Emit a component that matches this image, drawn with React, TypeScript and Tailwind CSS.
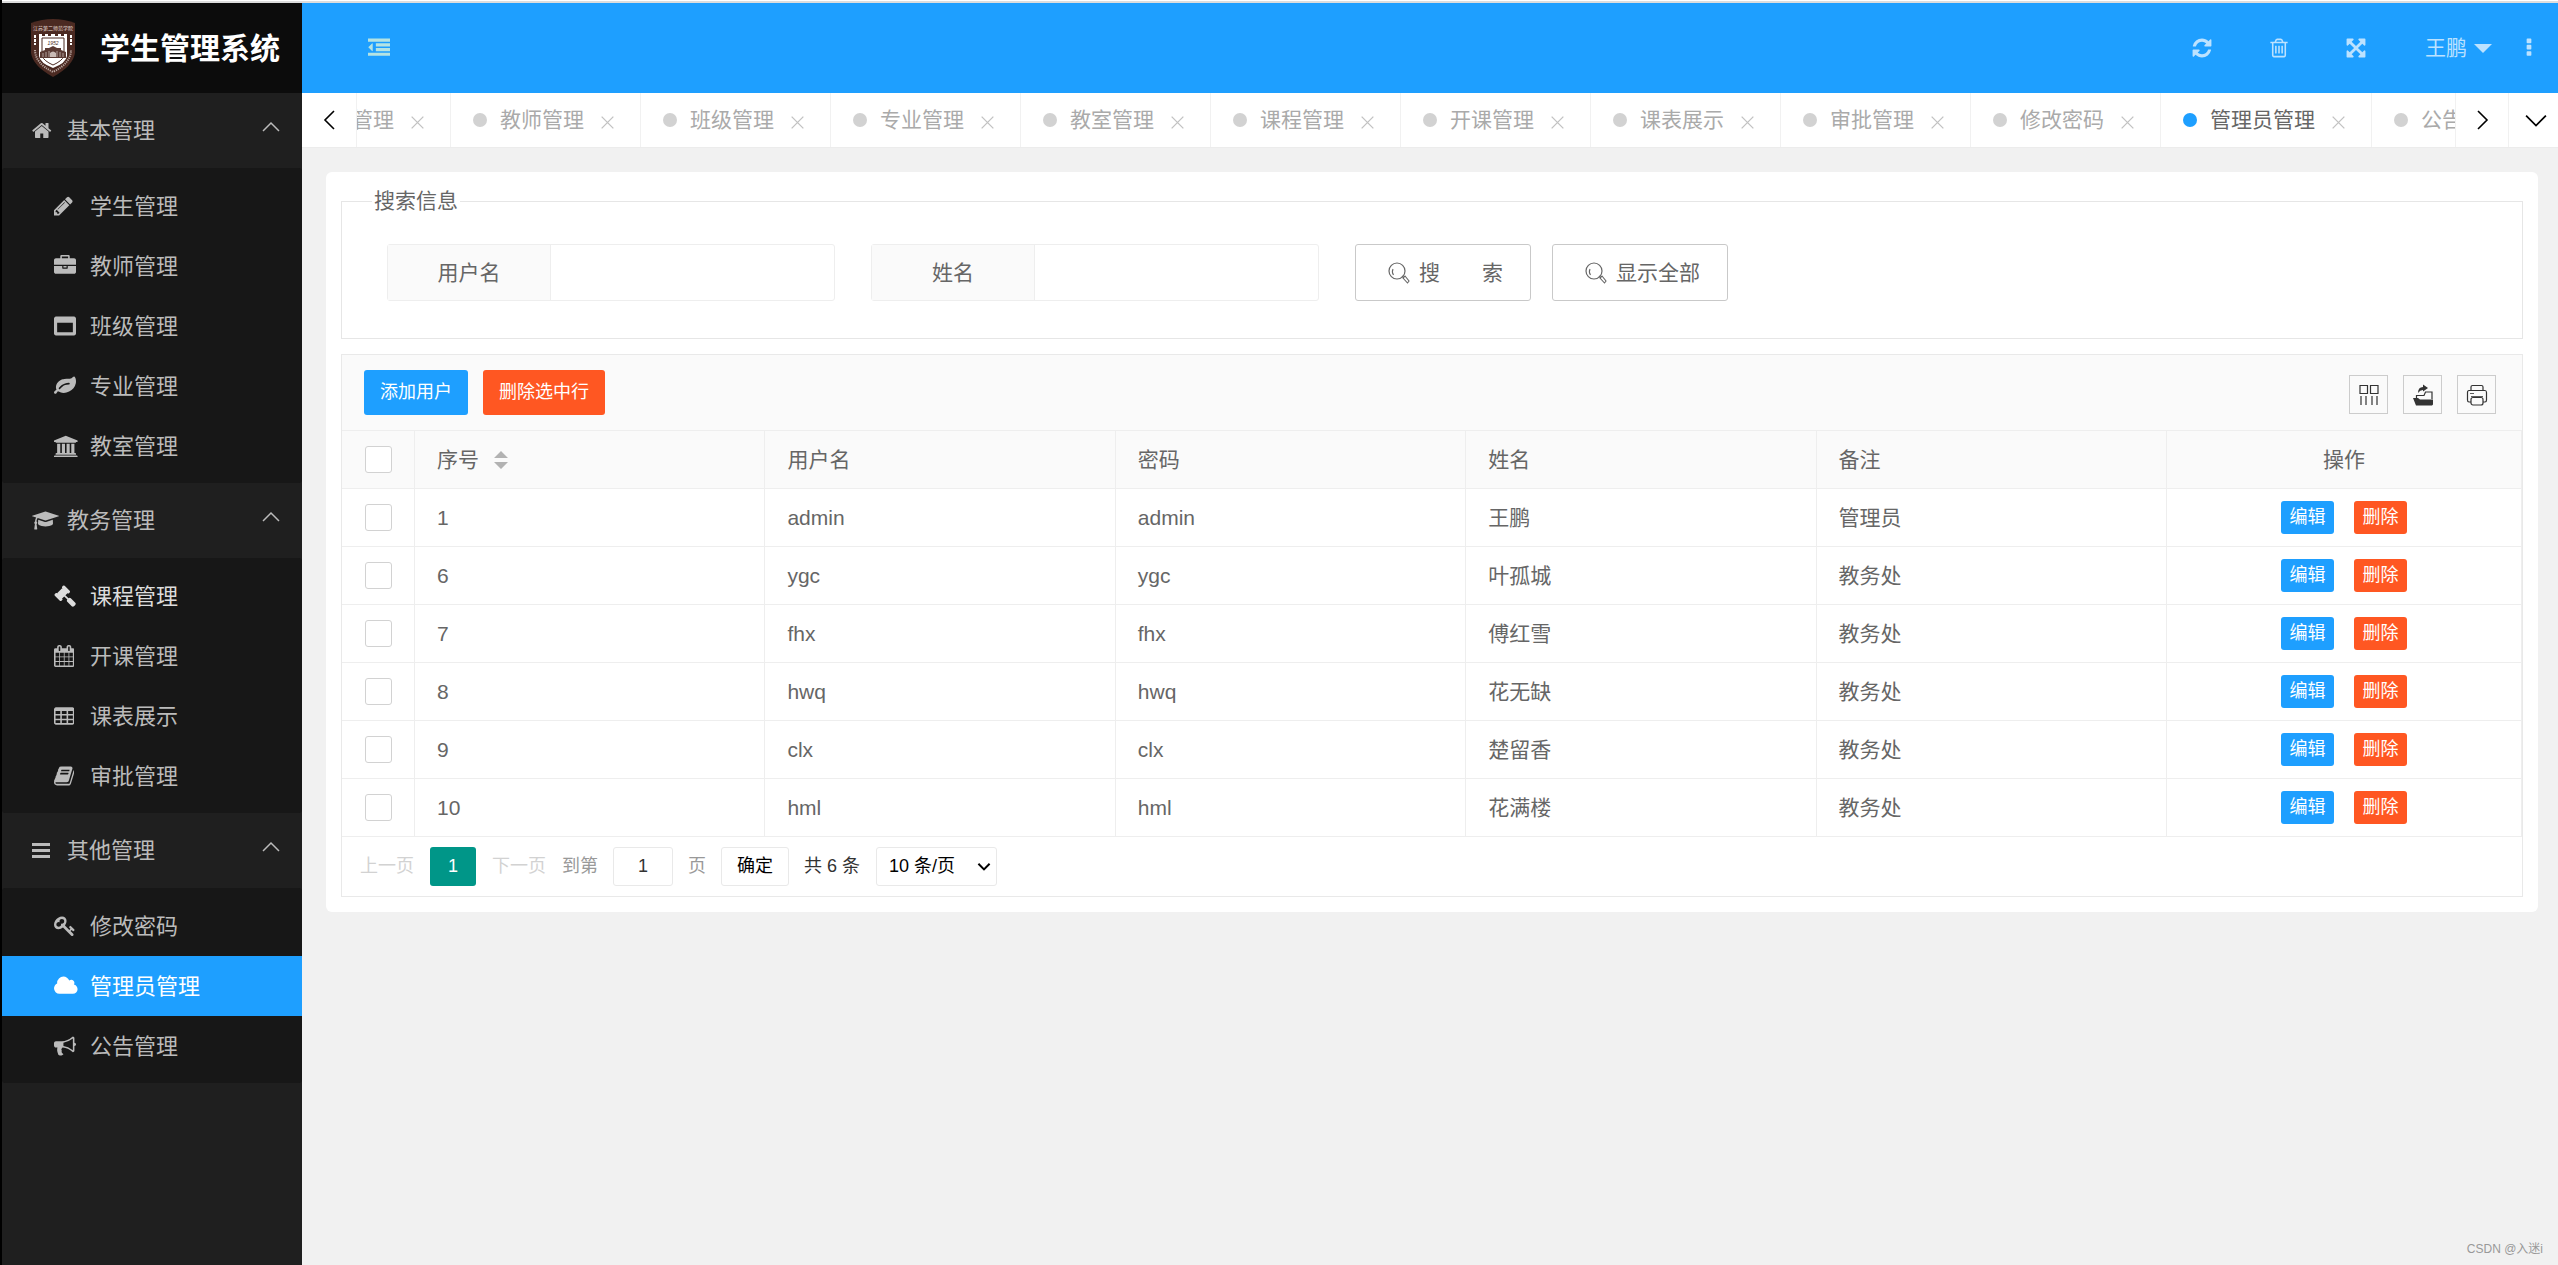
import React from 'react';
import clsx from 'clsx';

interface Glyph {
    box: string;
    d: string;
}

const glyphs: Record<string, Glyph> = {
    home: {
        box: '64 0 1664 1792',
        d: 'M1472 992v480q0 26-19 45t-45 19h-384v-384h-256v384h-384q-26 0-45-19t-19-45v-480q0-1 .5-3t.5-3l575-474 575 474q1 2 1 6zm223-69l-62 74q-8 9-21 11h-3q-13 0-21-7l-692-577-692 577q-12 8-24 7-13-2-21-11l-62-74q-8-10-7-23.5t11-21.5l719-599q32-26 76-26t76 26l244 204v-195q0-14 9-23t23-9h192q14 0 23 9t9 23v408l219 182q10 8 11 21.5t-7 23.5z',
    },
    pencil: {
        box: '128 0 1536 1792',
        d: 'M491 1536l91-91-235-235-91 91v107h128v128h107zm523-928q0-22-22-22-10 0-17 7l-542 542q-7 7-7 17 0 22 22 22 10 0 17-7l542-542q7-7 7-17zm-54-192l416 416-832 832h-416v-416zm683 96q0 53-37 90l-166 166-416-416 166-165q36-38 90-38 53 0 91 38l235 234q37 39 37 91z',
    },
    briefcase: {
        box: '0 0 1792 1792',
        d: 'M640 256h512v-128h-512v128zm1152 640v480q0 66-47 113t-113 47h-1472q-66 0-113-47t-47-113v-480h672v160q0 26 19 45t45 19h320q26 0 45-19t19-45v-160h672zm-768 0v128h-256v-128h256zm768-480v384h-1792v-384q0-66 47-113t113-47h352v-160q0-40 28-68t68-28h576q40 0 68 28t28 68v160h352q66 0 113 47t47 113z',
    },
    window: {
        box: '0 0 1792 1792',
        d: 'M256 1408h1280v-768h-1280v768zM1792 288v1216q0 66-47 113t-113 47h-1472q-66 0-113-47t-47-113v-1216q0-66 47-113t113-47h1472q66 0 113 47t47 113z',
    },
    leaf: {
        box: '0 0 1792 1792',
        d: 'M1280 704q0-26-19-45t-45-19q-172 0-318 49.5t-259.5 134-235.5 219.5q-19 21-19 45 0 26 19 45t45 19q24 0 45-19 27-24 74-71t67-66q137-124 268.5-176t313.5-52q26 0 45-19t19-45zm512-198q0 95-20 193-46 224-184.5 383t-357.5 268q-214 108-438 108-148 0-286-47-15-5-88-42t-96-37q-16 0-39.5 32t-45 70-52.5 70-60 32q-43 0-63.5-17.5t-45.5-59.5q-2-4-6-11t-5.5-10-3-9.5-1.5-13.5q0-35 31-73.5t68-65.5 68-56 31-48q0-4-14-38t-16-44q-9-51-9-104 0-115 43.5-220t119-184.5 170.5-139 204-95.5q55-18 145-25.5t179.5-9 178.5-6 163.5-24 113.5-56.5l29.5-29.5 29.5-28 27-20 36.5-16 43.5-4.5q39 0 70.5 46t47.5 112 24 124 8 96z',
    },
    university: {
        box: '-128 -64 1920 1792',
        d: 'M832 0l960 384v128h-128q0 26-20.5 45t-48.5 19h-1526q-28 0-48.5-19t-20.5-45h-128v-128zm-704 640h256v768h128v-768h256v768h128v-768h256v768h128v-768h256v768h59q28 0 48.5 19t20.5 45v64h-1664v-64q0-26 20.5-45t48.5-19h59v-768zm1595 960q28 0 48.5 19t20.5 45v128h-1920v-128q0-26 20.5-45t48.5-19h1782z',
    },
    graduation: {
        box: '0 0 2304 1792',
        d: 'M1774 836l18 316q4 69-82 128t-235 93.5-323 34.5-323-34.5-235-93.5-82-128l18-316 574 181q22 7 48 7t48-7zm530-324q0 23-22 31l-1120 352q-4 1-10 1t-10-1l-652-206q-43 34-71 111.5t-34 178.5q63 36 63 109 0 69-58 107l58 433q2 14-8 25-9 11-24 11h-192q-15 0-24-11-10-11-8-25l58-433q-58-38-58-107 0-73 65-111 11-207 98-330l-333-104q-22-8-22-31t22-31l1120-352q4-1 10-1t10 1l1120 352q22 8 22 31z',
    },
    gavel: {
        box: '0 0 1792 1792',
        d: 'M1771 1536q0 53-37 90l-107 108q-39 37-91 37-53 0-90-37l-363-364q-38-36-38-90 0-53 43-96l-256-256-126 126q-14 14-34 14t-34-14q2 2 12.5 12t12.5 13 10 11.5 10 13.5 6 13.5 5.5 16.5 1.5 18q0 38-28 68-3 3-16.5 18t-19 20.5-18.5 16.5-22 15.5-22 9-26 4.5q-40 0-68-28l-408-408q-28-28-28-68 0-13 4.5-26t9-22 15.5-22 16.5-18.5 20.5-19 18-16.5q30-28 68-28 10 0 18 1.5t16.5 5.5 13.5 6 13.5 10 11.5 10 13 12.5 12 12.5q-14-14-14-34t14-34l348-348q14-14 34-14t34 14q-2-2-12.5-12t-12.5-13-10-11.5-10-13.5-6-13.5-5.5-16.5-1.5-18q0-38 28-68 3-3 16.5-18t19-20.5 18.5-16.5 22-15.5 22-9 26-4.5q40 0 68 28l408 408q28 28 28 68 0 13-4.5 26t-9 22-15.5 22-16.5 18.5-20.5 19-18 16.5q-30 28-68 28-10 0-18-1.5t-16.5-5.5-13.5-6-13.5-10-11.5-10-13-12.5-12-12.5q14 14 14 34t-14 34l-126 126 256 256q43-43 96-43 52 0 91 37l363 363q37 39 37 91z',
    },
    calendar: {
        box: '64 0 1664 1792',
        d: 'M192 1664h288v-288h-288v288zm352 0h320v-288h-320v288zm-352-352h288v-320h-288v320zm352 0h320v-320h-320v320zm-352-384h288v-288h-288v288zm736 736h320v-288h-320v288zm-384-736h320v-288h-320v288zm768 736h288v-288h-288v288zm-384-352h320v-320h-320v320zm-352-864v-288q0-13-9.5-22.5t-22.5-9.5h-64q-13 0-22.5 9.5t-9.5 22.5v288q0 13 9.5 22.5t22.5 9.5h64q13 0 22.5-9.5t9.5-22.5zm736 864h288v-320h-288v320zm-384-384h320v-288h-320v288zm384 0h288v-288h-288v288zm32-480v-288q0-13-9.5-22.5t-22.5-9.5h-64q-13 0-22.5 9.5t-9.5 22.5v288q0 13 9.5 22.5t22.5 9.5h64q13 0 22.5-9.5t9.5-22.5zm384-64v1280q0 52-38 90t-90 38h-1408q-52 0-90-38t-38-90v-1280q0-52 38-90t90-38h128v-96q0-66 47-113t113-47h64q66 0 113 47t47 113v96h384v-96q0-66 47-113t113-47h64q66 0 113 47t47 113v96h128q52 0 90 38t38 90z',
    },
    table: {
        box: '64 64 1664 1792',
        d: 'M192 544h384v256h-384zM704 544h384v256h-384zM1216 544h384v256h-384zM192 928h384v256h-384zM704 928h384v256h-384zM1216 928h384v256h-384zM192 1312h384v224h-384zM704 1312h384v224h-384zM1216 1312h384v224h-384zM1728 416v1088q0 66-47 113t-113 47h-1344q-66 0-113-47t-47-113v-1088q0-66 47-113t113-47h1344q66 0 113 47t47 113z',
    },
    book: {
        box: '64 0 1664 1792',
        d: 'M1703 478q40 57 18 129l-275 906q-19 64-76.5 107.5t-122.5 43.5h-923q-77 0-148.5-53.5t-99.5-131.5q-24-67-2-127 0-4 3-27t4-37q1-8-3-21.5t-3-19.5q2-11 8-21t16.5-23.5 16.5-23.5q23-38 45-91.5t30-91.5q3-10 .5-30t-.5-28q3-11 17-28t17-23q21-36 42-92t25-90q1-9-2.5-32t.5-28q4-13 22-30.5t22-22.5q19-26 42.5-84.5t27.5-96.5q1-8-3-25.5t-2-26.5q2-8 9-18t18-23 17-21q8-12 16.5-30.5t15-35 16-36 19.5-32 26.5-23.5 36-11.5 47.5 5.5l-1 3q38-9 51-9h761q74 0 114 56t18 130l-274 906q-36 119-71.5 153.5t-128.5 34.5h-869q-27 0-38 15-11 16-1 43 24 70 144 70h923q29 0 56-15.5t35-41.5l300-987q7-22 5-57 38 15 59 43zm-1064 2q-4 13 2 22.5t20 9.5h608q13 0 25.5-9.5t16.5-22.5l21-64q4-13-2-22.5t-20-9.5h-608q-13 0-25.5 9.5t-16.5 22.5zm-83 256q-4 13 2 22.5t20 9.5h608q13 0 25.5-9.5t16.5-22.5l21-64q4-13-2-22.5t-20-9.5h-608q-13 0-25.5 9.5t-16.5 22.5z',
    },
    bars: {
        box: '128 0 1536 1792',
        d: 'M128 256h1536v256h-1536zM128 768h1536v256h-1536zM128 1280h1536v256h-1536z',
    },
    key: {
        box: '0 0 1792 1792',
        d: 'M832 512q0-80-56-136t-136-56-136 56-56 136q0 42 19 83-41-19-83-19-80 0-136 56t-56 136 56 136 136 56 136-56 56-136q0-42-19-83 41 19 83 19 80 0 136-56t56-136zm851 704q0 17-49 66t-66 49q-9 0-28.5-16t-36.5-33-38.5-40-24.5-26l-96 96 220 220q28 28 28 68 0 42-39 81t-81 39q-40 0-68-28l-671-671q-176 131-365 131-163 0-265.5-102.5t-102.5-265.5q0-160 95-313t248-248 313-95q163 0 265.5 102.5t102.5 265.5q0 189-131 365l355 355 96-96q-3-3-26-24.5t-40-38.5-33-36.5-16-28.5q0-17 49-66t66-49q13 0 23 10 6 6 46 44.5t82 79.5 86.5 86 73 78 28.5 41z',
    },
    cloud: {
        box: '-64 0 1920 1792',
        d: 'M1856 1152q0 159-112.5 271.5t-271.5 112.5h-1088q-185 0-316.5-131.5t-131.5-316.5q0-132 71-241.5t187-163.5q-2-28-2-43 0-212 150-362t362-150q158 0 286.5 88t187.5 230q70-62 166-62 106 0 181 75t75 181q0 75-41 138 129 30 213 134.5t84 239.5z',
    },
    bullhorn: {
        box: '0 0 1792 1792',
        d: 'M1664 640q53 0 90.5 37.5t37.5 90.5-37.5 90.5-90.5 37.5v384q0 52-38 90t-90 38q-417-347-812-380-58 19-91 66t-31 100.5 40 92.5q-20 33-23 65.5t6 58 33.5 55 48 50 61.5 50.5q-29 58-111.5 83t-168.5 11.5-132-55.5q-7-23-29.5-87.5t-32-94.5-23-89-15-101 3.5-98.5 22-110.5h-122q-66 0-113-47t-47-113v-192q0-66 47-113t113-47h480q435 0 896-384 52 0 90 38t38 90v384zm-128 604v-954q-394 302-768 343v270q377 42 768 341z',
    },
    dedent: {
        box: '0 0 1792 1792',
        d: 'M384 544v576q0 13-9.5 22.5t-22.5 9.5q-14 0-23-9l-288-288q-9-9-9-23t9-23l288-288q9-9 23-9 13 0 22.5 9.5t9.5 22.5zM0 128h1792v256h-1792zM640 512h1152v256h-1152zM640 896h1152v256h-1152zM0 1280h1792v256h-1792z',
    },
    refresh: {
        box: '0 0 1792 1792',
        d: 'M1639 1056q0 5-1 7-64 268-268 434.5t-478 166.5q-146 0-282.5-55t-243.5-157l-129 129q-19 19-45 19t-45-19-19-45v-448q0-26 19-45t45-19h448q26 0 45 19t19 45-19 45l-137 137q71 66 161 102t187 36q134 0 250-65t186-179q11-17 53-117 8-23 30-23h192q13 0 22.5 9.5t9.5 22.5zm25-800v448q0 26-19 45t-45 19h-448q-26 0-45-19t-19-45 19-45l138-138q-148-137-349-137-134 0-250 65t-186 179q-11 17-53 117-8 23-30 23h-199q-13 0-22.5-9.5t-9.5-22.5v-7q65-268 270-434.5t480-166.5q146 0 284 55.5t245 156.5l130-129q19-19 45-19t45 19 19 45z',
    },
    trash: {
        box: '0 0 1792 1792',
        d: 'M704 736v576q0 14-9 23t-23 9h-64q-14 0-23-9t-9-23v-576q0-14 9-23t23-9h64q14 0 23 9t9 23zm256 0v576q0 14-9 23t-23 9h-64q-14 0-23-9t-9-23v-576q0-14 9-23t23-9h64q14 0 23 9t9 23zm256 0v576q0 14-9 23t-23 9h-64q-14 0-23-9t-9-23v-576q0-14 9-23t23-9h64q14 0 23 9t9 23zm128 724v-948h-896v948q0 22 7 40.5t14.5 27 10.5 8.5h832q3 0 10.5-8.5t14.5-27 7-40.5zm-672-1076h448l-48-117q-7-9-17-11h-317q-10 2-17 11zm928 32v64q0 14-9 23t-23 9h-96v948q0 83-47 143.5t-113 60.5h-832q-66 0-113-58.5t-47-141.5v-952h-96q-14 0-23-9t-9-23v-64q0-14 9-23t23-9h309l70-167q15-37 54-63t79-26h320q40 0 79 26t54 63l70 167h309q14 0 23 9t9 23z',
    },
    expand: {
        box: '0 0 1792 1792',
        d: 'M1411 541l-355 355 355 355 144-144q29-31 70-14 39 17 39 59v448q0 26-19 45t-45 19h-448q-42 0-59-40-17-39 14-69l144-144-355-355-355 355 144 144q31 30 14 69-17 40-59 40h-448q-26 0-45-19t-19-45v-448q0-42 40-59 39-17 69 14l144 144 355-355-355-355-144 144q-19 19-45 19-12 0-24-5-40-17-40-59v-448q0-26 19-45t45-19h448q42 0 59 40 17 39-14 69l-144 144 355 355 355-355-144-144q-31-30-14-69 17-40 59-40h448q26 0 45 19t19 45v448q0 42-39 59-13 5-25 5-26 0-45-19z',
    },
    more: {
        box: '0 0 1792 1792',
        d: 'M768 128h256q64 0 64 64v256q0 64-64 64h-256q-64 0-64-64v-256q0-64 64-64zM768 640h256q64 0 64 64v256q0 64-64 64h-256q-64 0-64-64v-256q0-64 64-64zM768 1152h256q64 0 64 64v256q0 64-64 64h-256q-64 0-64-64v-256q0-64 64-64z',
    },
};

const Icon = ({ name, className = 'h-[22px]' }: { name: string; className?: string }) => (
    <svg viewBox={glyphs[name].box} className={clsx('w-auto shrink-0', className)} fill="currentColor" fillRule="evenodd" aria-hidden="true">
        <path d={glyphs[name].d} />
    </svg>
);

const menu = [
    {
        title: '基本管理',
        icon: 'home',
        items: [
            { icon: 'pencil', label: '学生管理' },
            { icon: 'briefcase', label: '教师管理' },
            { icon: 'window', label: '班级管理' },
            { icon: 'leaf', label: '专业管理' },
            { icon: 'university', label: '教室管理' },
        ],
    },
    {
        title: '教务管理',
        icon: 'graduation',
        items: [
            { icon: 'gavel', label: '课程管理' },
            { icon: 'calendar', label: '开课管理' },
            { icon: 'table', label: '课表展示' },
            { icon: 'book', label: '审批管理' },
        ],
    },
    {
        title: '其他管理',
        icon: 'bars',
        items: [
            { icon: 'key', label: '修改密码' },
            { icon: 'cloud', label: '管理员管理' },
            { icon: 'bullhorn', label: '公告管理' },
        ],
    },
];

const tabs = ['学生管理', '教师管理', '班级管理', '专业管理', '教室管理', '课程管理', '开课管理', '课表展示', '审批管理', '修改密码', '管理员管理', '公告管理'];

const users = [
    { id: 1, username: 'admin', password: 'admin', name: '王鹏', remark: '管理员' },
    { id: 6, username: 'ygc', password: 'ygc', name: '叶孤城', remark: '教务处' },
    { id: 7, username: 'fhx', password: 'fhx', name: '傅红雪', remark: '教务处' },
    { id: 8, username: 'hwq', password: 'hwq', name: '花无缺', remark: '教务处' },
    { id: 9, username: 'clx', password: 'clx', name: '楚留香', remark: '教务处' },
    { id: 10, username: 'hml', password: 'hml', name: '花满楼', remark: '教务处' },
];

const current = '管理员管理';
const hovered = '课程管理';

const Logo = () => (
    <svg viewBox="0 0 44 58" className="h-[58px] w-[44px] shrink-0" aria-label="校徽">
        <path d="M0 4Q22-4 44 4V34Q42 47 22 58Q2 47 0 34Z" fill="#4b2a22" />
        <text x="22" y="11" textAnchor="middle" fontSize="5" fill="#e9dfdb">江苏第二师范学院</text>
        <path d="M8 15h3v2h3v-2h3v2h3v-2h4v2h3v-2h3v2h3v-2h3V37Q35 44 22 49Q9 44 8 37Z" fill="#fff" />
        <path d="M11 19H33V37Q31 42 22 46Q13 42 11 37Z" fill="none" stroke="#4b2a22" />
        <text x="22" y="26" textAnchor="middle" fontSize="5" fontStyle="italic" fill="#4b2a22">1952</text>
        <path d="M9 39v-6l5-2v-2h4l4-2 4 2h4v2l5 2v6Z" fill="#5a3a33" />
        <path d="M12 34v4M15 33v5M18 32v6M26 32v6M29 33v5M32 34v4" stroke="#d9cdc9" strokeWidth=".7" />
        <path d="M19 38v-4q3-3 6 0v4Z" fill="#c9bab5" />
        <path d="M4 16v10M40 16v10" stroke="#fff" strokeWidth="2" strokeDasharray="3 1" />
        <path d="M4 31Q4 44 22 53Q40 44 40 31" fill="none" stroke="#b9a6a0" strokeWidth="2" strokeDasharray="1.2 1" />
    </svg>
);

const Chevron = ({ d, className }: { d: string; className: string }) => (
    <svg viewBox="0 0 20 20" className={className} fill="none" stroke="currentColor" aria-hidden="true">
        <path d={d} />
    </svg>
);

const Sidebar = () => (
    <aside className="w-[300px] shrink-0 bg-[#1f1f1f] text-[#bbb]">
        <div className="flex h-[90px] items-center gap-[25px] bg-[#0c0c0c] pl-[29px] text-white">
            <Logo />
            <h1 className="text-[30px] font-bold">学生管理系统</h1>
        </div>
        <nav>
            {menu.map((group) => (
                <section key={group.title}>
                    <button type="button" className="flex h-[75px] w-full items-center pr-[21px] pl-[30px] text-[22px]">
                        <span className="w-[35px]">
                            <Icon name={group.icon} className="h-[21px]" />
                        </span>
                        <span className="flex-1 text-left">{group.title}</span>
                        <Chevron d="M2 14 10 6 18 14" className="mb-2 h-[20px] w-[20px] stroke-[1.5]" />
                    </button>
                    <ul className="rounded-[3px] bg-[#171717] pt-[8px] pb-[7px]">
                        {group.items.map((item) => (
                            <li key={item.label}>
                                <a
                                    href="#"
                                    className={clsx(
                                        'flex h-[60px] items-center pl-[52px] text-[22px]',
                                        item.label === current && 'bg-[#1e9fff] text-white',
                                        item.label === hovered && 'text-[#ddd]'
                                    )}
                                >
                                    <span className="w-[36px]">
                                        <Icon name={item.icon} />
                                    </span>
                                    {item.label}
                                </a>
                            </li>
                        ))}
                    </ul>
                </section>
            ))}
        </nav>
    </aside>
);

const TopBar = () => (
    <header className="flex h-[90px] items-center justify-between bg-[#1e9fff] text-[21px] text-[#bce2ff]">
        <button type="button" aria-label="收起菜单" className="ml-[66px] text-[#b4e3e3]">
            <Icon name="dedent" />
        </button>
        <div className="flex items-center">
            <button type="button" aria-label="刷新" className="flex w-[77px] justify-center">
                <Icon name="refresh" />
            </button>
            <button type="button" aria-label="清理" className="flex w-[77px] justify-center">
                <Icon name="trash" />
            </button>
            <button type="button" aria-label="全屏" className="flex w-[77px] justify-center">
                <Icon name="expand" />
            </button>
            <button type="button" className="flex items-center gap-[7px] pl-[31px]">
                王鹏
                <svg viewBox="0 0 18 9" className="h-[9px] w-[18px]" fill="currentColor" aria-hidden="true">
                    <path d="M0 0h18l-9 9z" />
                </svg>
            </button>
            <button type="button" aria-label="更多" className="mr-[18px] ml-[26px]">
                <Icon name="more" />
            </button>
        </div>
    </header>
);

const TabBar = () => (
    <div className="flex h-[55px] border-b border-[#ececec] bg-white">
        <button type="button" aria-label="向左" className="flex w-[55px] shrink-0 items-center justify-center border-r border-[#f1f1f1] text-black">
            <Chevron d="M15 1 6 10 15 19" className="size-[20px] stroke-[1.6]" />
        </button>
        <div className="flex-1 overflow-hidden">
            <div className="-ml-[96px] flex h-full">
                {tabs.map((tab) => (
                    <div
                        key={tab}
                        className={clsx(
                            'flex shrink-0 items-center border-r border-[#f1f1f1] pr-[26px] pl-[22px] text-[21px]',
                            tab === current ? 'text-[#666]' : 'text-[#aaa]'
                        )}
                    >
                        <span className={clsx('mr-[13px] size-[14px] rounded-full', tab === current ? 'bg-[#1e9fff]' : 'bg-[#d2d2d2]')} />
                        <button type="button">{tab}</button>
                        <button type="button" aria-label={`关闭${tab}`} className="mt-1 ml-[17px] text-[#c2c2c2]">
                            <Chevron d="M1 1 19 19M19 1 1 19" className="size-[13px] stroke-2" />
                        </button>
                    </div>
                ))}
            </div>
        </div>
        <button type="button" aria-label="向右" className="flex w-[53px] shrink-0 items-center justify-center border-l border-[#f1f1f1] text-black">
            <Chevron d="M6 1 15 10 6 19" className="size-[20px] stroke-[1.6]" />
        </button>
        <button type="button" aria-label="标签操作" className="flex w-[50px] shrink-0 items-center border-l border-[#f1f1f1] pl-4 text-black">
            <Chevron d="M1 6 10 15 19 6" className="size-[22px] stroke-[1.6]" />
        </button>
    </div>
);

const SearchField = ({ id, label }: { id: string; label: string }) => (
    <div className="mr-[36px] flex h-[57px] w-[448px] rounded-[3px] border border-[#eee]">
        <label htmlFor={id} className="flex w-[163px] shrink-0 items-center justify-center border-r border-[#eee] bg-[#fafafa]">
            {label}
        </label>
        <input id={id} type="text" className="w-full min-w-0 px-4 outline-none" />
    </div>
);

const SearchButton = ({ children }: { children: React.ReactNode }) => (
    <button type="button" className="mr-[21px] flex h-[57px] w-[176px] items-center gap-[9px] rounded-[3px] border border-[#c9c9c9] bg-white pl-8">
        <svg viewBox="0 0 22 22" className="size-[22px]" fill="none" stroke="currentColor" strokeWidth="1.2" aria-hidden="true">
            <circle cx="9" cy="9" r="8" />
            <path d="M5 7Q3.5 10 5.5 13M15 16l2-2 4 5-1.5 2zM14 14l2 2" strokeWidth="1.1" />
        </svg>
        {children}
    </button>
);

const SearchPanel = () => (
    <fieldset className="mb-[15px] border border-[#e6e6e6] pb-[37px] pl-[45px]">
        <legend className="-ml-[15px] px-[2px] leading-[28px]">搜索信息</legend>
        <form className="flex flex-wrap pt-[29px]">
            <SearchField id="username" label="用户名" />
            <SearchField id="realname" label="姓名" />
            <SearchButton>{'搜\u3000\u3000索'}</SearchButton>
            <SearchButton>显示全部</SearchButton>
        </form>
    </fieldset>
);

const toolClass = 'flex size-[39px] items-center justify-center border border-[#ccc] text-[#333]';

const Toolbar = () => (
    <div className="flex h-[76px] items-center justify-between border-b border-[#eee] bg-[#fafafa] pr-[26px] pl-[22px]">
        <div className="flex gap-[15px] text-[18px] text-white">
            <button type="button" className="h-[45px] rounded-[3px] bg-[#1e9fff] px-4">添加用户</button>
            <button type="button" className="h-[45px] rounded-[3px] bg-[#ff5722] px-4">删除选中行</button>
        </div>
        <div className="mt-1 flex gap-[15px]">
            <button type="button" aria-label="筛选列" className={toolClass}>
                <svg viewBox="0 0 22 22" className="size-[22px]" fill="none" stroke="currentColor" strokeWidth="1.2">
                    <path d="M2 1.5h7.5v8H2zM12.5 1.5h7.5v8h-7.5zM3 12v9M8 12v9M14 12v9M19 12v9" />
                </svg>
            </button>
            <button type="button" aria-label="导出" className={toolClass}>
                <svg viewBox="0 0 22 22" className="size-[22px]" fill="currentColor">
                    <path d="M1 14h5l2 1.500h13v5l-1 1H4z" />
                    <path d="M4.500 14V11.500H12L13.500 8H20V15" fill="none" stroke="currentColor" strokeWidth="1.2" />
                    <path d="M6 9Q6 3 11 3V0.500l5 3.500-5 3.500V6Q8 6 6 9z" />
                </svg>
            </button>
            <button type="button" aria-label="打印" className={toolClass}>
                <svg viewBox="0 0 22 22" className="size-[22px]" fill="none" stroke="currentColor" strokeWidth="1.2">
                    <path d="M5 6.5V3q0-1.5 1.5-1.5h9Q17 1.500 17 3v3.500M5 18H3q-1.500 0-1.500-2V8.500Q1.500 6.500 3 6.500h16q1.500 0 1.500 2V16q0 2-1.500 2h-2" />
                    <rect x="5" y="13.5" width="12" height="7.5" rx="2" />
                    <path d="M4 9.5h4M5 12.5h12" strokeWidth=".8" />
                </svg>
            </button>
        </div>
    </div>
);

const Check = ({ label }: { label: string }) => (
    <input type="checkbox" aria-label={label} className="mx-auto block size-[27px] appearance-none rounded-[3px] border border-[#d2d2d2] bg-white" />
);

const cell = 'h-[58px] border-r border-b border-[#eee] px-[22px] text-left font-normal';
const opButton = 'h-[33px] w-[53px] rounded-[3px] text-[18px] leading-[33px] text-white';

const UserTable = () => (
    <table className="w-full table-fixed border-separate border-spacing-0">
        <colgroup>
            <col className="w-[73px]" />
            <col />
            <col />
            <col />
            <col />
            <col />
            <col className="w-[355px]" />
        </colgroup>
        <thead className="bg-[#fafafa]">
            <tr>
                <th className="h-[58px] border-r border-b border-[#eee]">
                    <Check label="全选" />
                </th>
                <th className={cell}>
                    <span className="flex items-center gap-[15px]">
                        序号
                        <svg viewBox="0 0 14 20" className="h-[20px] w-[14px]" fill="#b2b2b2" aria-hidden="true">
                            <path d="M0 8h14L7 1zM0 12h14l-7 7z" />
                        </svg>
                    </span>
                </th>
                <th className={cell}>用户名</th>
                <th className={cell}>密码</th>
                <th className={cell}>姓名</th>
                <th className={cell}>备注</th>
                <th className="border-r border-b border-[#eee] text-center font-normal">操作</th>
            </tr>
        </thead>
        <tbody>
            {users.map((user) => (
                <tr key={user.id}>
                    <td className="h-[58px] border-r border-b border-[#eee]">
                        <Check label={`选择${user.name}`} />
                    </td>
                    <td className={cell}>{user.id}</td>
                    <td className={cell}>{user.username}</td>
                    <td className={cell}>{user.password}</td>
                    <td className={cell}>{user.name}</td>
                    <td className={cell}>{user.remark}</td>
                    <td className="border-r border-b border-[#eee]">
                        <div className="flex justify-center gap-[20px]">
                            <button type="button" className={clsx(opButton, 'bg-[#1e9fff]')}>编辑</button>
                            <button type="button" className={clsx(opButton, 'bg-[#ff5722]')}>删除</button>
                        </div>
                    </td>
                </tr>
            ))}
        </tbody>
    </table>
);

const Pagination = () => (
    <div className="flex h-[59px] items-center pl-[18px] text-[18px] text-[#333]">
        <button type="button" disabled className="text-[#d2d2d2]">上一页</button>
        <button type="button" className="mx-4 h-[39px] w-[46px] rounded-[3px] bg-[#009688] text-white">1</button>
        <button type="button" disabled className="text-[#d2d2d2]">下一页</button>
        <label htmlFor="page" className="ml-4 text-[#999]">到第</label>
        <input id="page" type="text" defaultValue="1" className="mx-[15px] h-[39px] w-[60px] rounded-[3px] border border-[#e9e9e9] text-center" />
        <span className="text-[#999]">页</span>
        <button type="button" className="mx-[15px] h-[39px] w-[68px] rounded-[3px] border border-[#e9e9e9] text-black">确定</button>
        <span>共 6 条</span>
        <div className="relative ml-4">
            <select aria-label="每页条数" className="h-[39px] w-[121px] appearance-none rounded-[3px] border border-[#e9e9e9] bg-white pl-3 text-black">
                <option>10 条/页</option>
                <option>20 条/页</option>
            </select>
            <Chevron d="M3 6 10 13 17 6" className="pointer-events-none absolute top-3 right-[5px] size-4 stroke-[2.5] text-black" />
        </div>
    </div>
);

const App: React.FC = () => {
    return (
        <div className="relative min-h-screen border-l-2 border-black bg-[#f1f1f1] text-[#666] [font-family:'Liberation_Sans','Noto_Sans_CJK_SC',sans-serif]">
            <div className="h-[3px] border-t border-white bg-[#ddd]" />
            <div className="flex min-h-[calc(100vh-3px)]">
                <Sidebar />
                <div className="min-w-0 flex-1">
                    <TopBar />
                    <TabBar />
                    <main className="mx-[20px] mt-[24px] ml-[24px] rounded-[6px] bg-white p-[15px] text-[21px]">
                        <SearchPanel />
                        <div className="border border-[#e9e9e9]">
                            <Toolbar />
                            <UserTable />
                            <Pagination />
                        </div>
                    </main>
                </div>
            </div>
            <span className="absolute right-[15px] bottom-[7px] text-[12px] text-[#999]">CSDN @入迷i</span>
        </div>
    );
};

export default App;
